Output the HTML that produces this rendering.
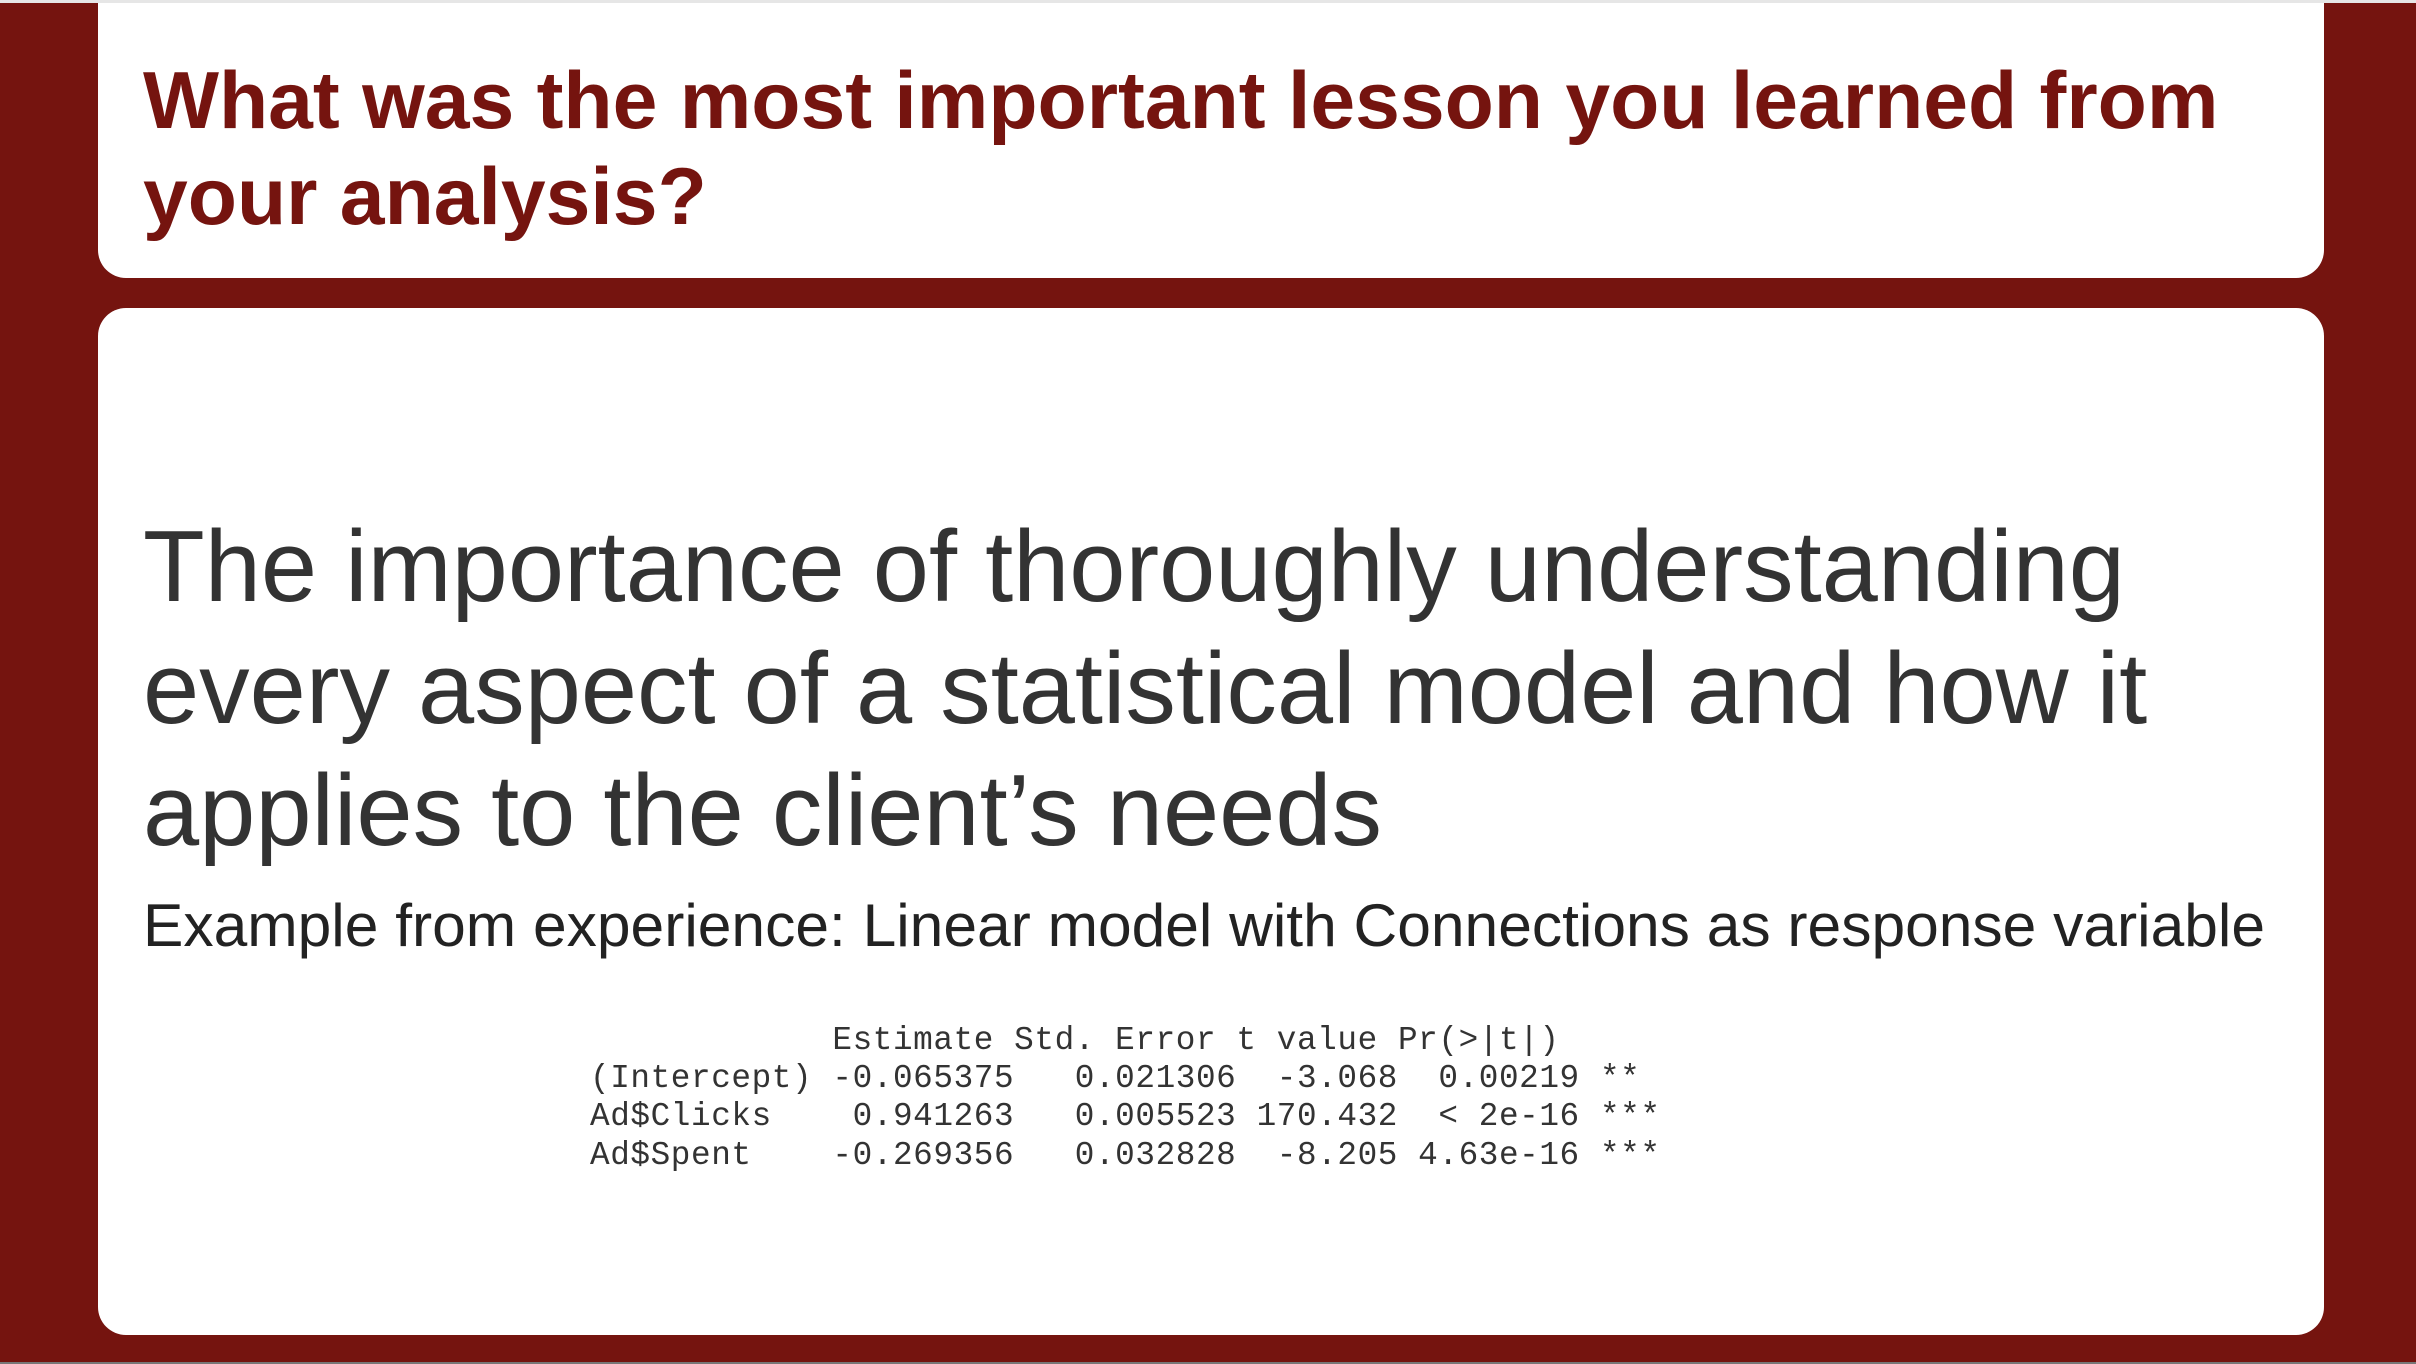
<!DOCTYPE html>
<html><head><meta charset="utf-8"><style>
html,body{margin:0;padding:0}
body{width:2416px;height:1364px;background:#75140f;position:relative;overflow:hidden;font-family:"Liberation Sans",Arial,sans-serif}
.top{position:absolute;left:0;top:0;width:2416px;height:3px;background:#e6e6e6}
.bot{position:absolute;left:0;top:1362px;width:2416px;height:2px;background:#777}
.b1{position:absolute;left:98px;top:3px;width:2226px;height:275px;background:#fff;border-radius:0 0 28px 28px}
.b2{position:absolute;left:98px;top:308px;width:2226px;height:1027px;background:#fff;border-radius:28px}
.h{position:absolute;left:143px;top:53px;margin:0;font-weight:bold;font-size:80.5px;line-height:96px;color:#75140f;width:2150px}
.m{position:absolute;left:143px;top:506px;font-size:101px;line-height:122px;color:#333;width:2200px}
.e{position:absolute;left:143px;top:890px;font-size:60.5px;line-height:70px;color:#222;white-space:nowrap}
pre{position:absolute;left:590px;top:1022px;margin:0;font-family:"Liberation Mono",monospace;font-size:33px;line-height:38.2px;color:#333;letter-spacing:0.6px;transform:scaleX(0.99);transform-origin:0 0}
</style></head><body>
<div class="top"></div>
<div class="b1"></div>
<div class="b2"></div>
<div class="h">What was the most important lesson you learned from your analysis?</div>
<div class="m">The importance of thoroughly understanding every aspect of a statistical model and how it applies to the client’s needs</div>
<div class="e">Example from experience: Linear model with Connections as response variable</div>
<pre>            Estimate Std. Error t value Pr(&gt;|t|)    
(Intercept) -0.065375   0.021306  -3.068  0.00219 ** 
Ad$Clicks    0.941263   0.005523 170.432  &lt; 2e-16 ***
Ad$Spent    -0.269356   0.032828  -8.205 4.63e-16 ***</pre>
<div class="bot"></div>
</body></html>
